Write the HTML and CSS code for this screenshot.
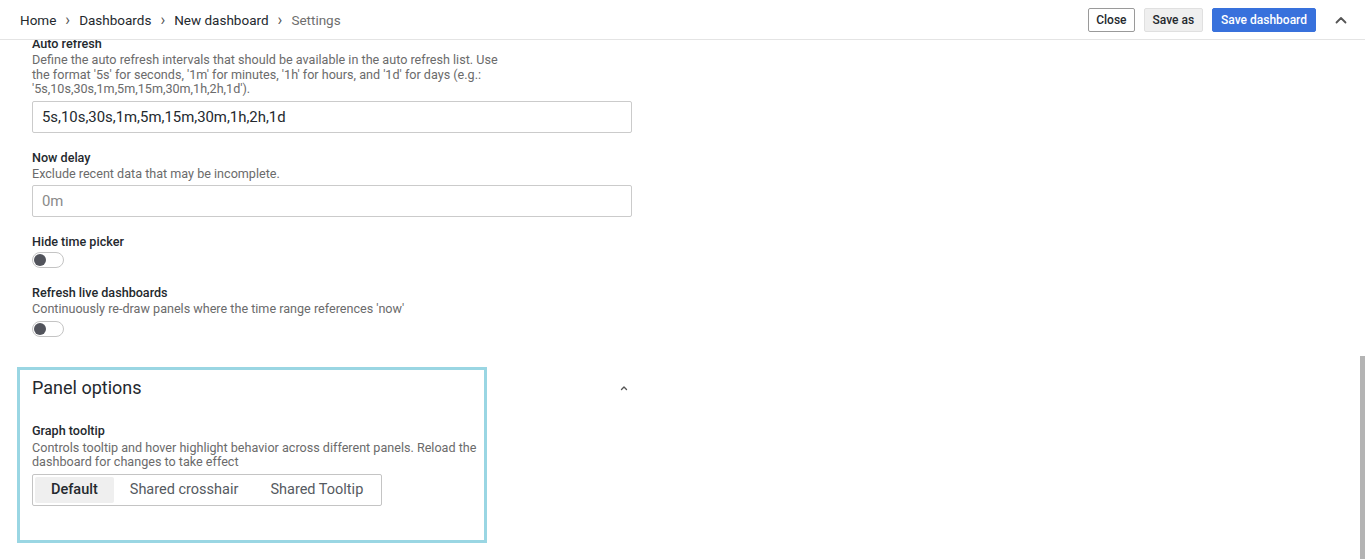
FILE: index.html
```
<!DOCTYPE html>
<html lang="en">
<head>
<meta charset="utf-8">
<title>Settings</title>
<link rel="stylesheet" href="styles.css">
</head>
<body>
<div class="app">
  <header class="topbar">
    <nav class="crumbs">
      <span class="crumb">Home</span>
      <span class="sep">›</span>
      <span class="crumb">Dashboards</span>
      <span class="sep">›</span>
      <span class="crumb">New dashboard</span>
      <span class="sep">›</span>
      <span class="crumb current">Settings</span>
    </nav>
    <div class="actions">
      <button class="btn btn-outline">Close</button>
      <button class="btn btn-secondary">Save as</button>
      <button class="btn btn-primary">Save dashboard</button>
      <span class="collapse">
        <svg width="14" height="14" viewBox="0 0 14 14"><path d="M2.5 9.5 L7 5 L11.5 9.5" fill="none" stroke="#555" stroke-width="1.8" stroke-linecap="round" stroke-linejoin="round"/></svg>
      </span>
    </div>
  </header>
  <div class="body-row">
    <main class="content">
      <div class="field first">
        <div class="label">Auto refresh</div>
        <div class="desc">Define the auto refresh intervals that should be available in the auto refresh list. Use<br>the format '5s' for seconds, '1m' for minutes, '1h' for hours, and '1d' for days (e.g.:<br>'5s,10s,30s,1m,5m,15m,30m,1h,2h,1d').</div>
        <div class="input">5s,10s,30s,1m,5m,15m,30m,1h,2h,1d</div>
      </div>
      <div class="field">
        <div class="label">Now delay</div>
        <div class="desc">Exclude recent data that may be incomplete.</div>
        <div class="input placeholder">0m</div>
      </div>
      <div class="field">
        <div class="label">Hide time picker</div>
        <div class="toggle"><span class="knob"></span></div>
      </div>
      <div class="field">
        <div class="label">Refresh live dashboards</div>
        <div class="desc">Continuously re-draw panels where the time range references 'now'</div>
        <div class="toggle"><span class="knob"></span></div>
      </div>
      <section class="panel-box">
        <div class="section-head">
          <h2 class="section-title">Panel options</h2>
          <svg class="section-chev" width="10" height="10" viewBox="0 0 10 10"><path d="M2.5 6.5 L5 4 L7.5 6.5" fill="none" stroke="#555" stroke-width="1.4" stroke-linecap="round" stroke-linejoin="round"/></svg>
        </div>
        <div class="field tooltip-field">
          <div class="label">Graph tooltip</div>
          <div class="desc narrow">Controls tooltip and hover highlight behavior across different panels. Reload the dashboard for changes to take effect</div>
          <div class="radio-group">
            <span class="opt active">Default</span>
            <span class="opt">Shared crosshair</span>
            <span class="opt">Shared Tooltip</span>
          </div>
        </div>
      </section>
    </main>
    <div class="scroll-track"><div class="scroll-thumb"></div></div>
  </div>
</div>
</body>
</html>
```
FILE: styles.css
```
* { box-sizing: border-box; }
html, body { margin: 0; padding: 0; }
body {
  font-family: "Roboto", "Liberation Sans", sans-serif;
  color: #24292e;
  background: #ffffff;
  width: 1365px;
  height: 559px;
  overflow: hidden;
}
.app { display: flex; flex-direction: column; height: 559px; }
.topbar {
  height: 40px;
  flex: none;
  display: flex;
  align-items: center;
  justify-content: space-between;
  padding: 0 9px 0 20px;
  border-bottom: 1px solid #e4e4e4;
}
.crumbs { display: flex; align-items: center; font-size: 13.5px; }
.crumb { color: #24292e; }
.crumb.current { color: #6e6e6e; }
.sep { color: #555; margin: 0 9px; font-size: 16px; line-height: 14px; }
.actions { display: flex; align-items: center; gap: 9px; }
.btn {
  font-family: inherit;
  font-size: 12px;
  font-weight: 500;
  height: 24px;
  padding: 0 8px;
  border-radius: 2px;
  cursor: pointer;
}
.btn-outline { background: #fff; border: 1px solid #9a9a9a; color: #24292e; padding: 0 7px; }
.btn-secondary { background: #efefef; border: 1px solid #e0e0e0; color: #24292e; }
.btn-primary { background: #3871dc; border: 1px solid #3871dc; color: #fff; }
.collapse { display: flex; align-items: center; justify-content: center; width: 30px; height: 24px; margin-left: 1px; }

.body-row { flex: 1; display: flex; min-height: 0; }
.content { flex: 1; padding: 0 0 0 32px; overflow: hidden; }
.scroll-track { width: 5px; flex: none; padding-top: 316px; }
.scroll-thumb { height: 203px; background: #b4b4b4; }

.field { width: 600px; margin-top: 17px; }
.field.first { margin-top: -4px; }
.label { font-size: 12.6px; font-weight: 500; line-height: 16px; color: #24292e; }
.desc { font-size: 12.6px; line-height: 14.5px; color: #6b6b6b; margin-top: 1px; max-width: 482px; }
.input {
  margin-top: 4px;
  height: 32px;
  border: 1px solid #cbcbcb;
  border-radius: 2px;
  padding: 0 9px;
  font-size: 14.9px;
  line-height: 30px;
  color: #24292e;
}
.input.placeholder { color: #8a8a8a; }
.toggle {
  margin-top: 2px;
  width: 32px;
  height: 16px;
  border: 1px solid #c4c4c4;
  border-radius: 8px;
  position: relative;
  background: #fff;
}
.knob {
  position: absolute;
  left: 1px;
  top: 1px;
  width: 12px;
  height: 12px;
  border-radius: 50%;
  background: #52545c;
}
.desc + .toggle { margin-top: 4px; }

.panel-box {
  margin: 30px 0 17px -15px;
  width: 470px;
  border: 3px solid #9ad6e3;
  padding: 5px 0 34px 12px;
}
.section-head {
  width: 600px;
  display: flex;
  align-items: center;
  justify-content: space-between;
  height: 26px;
}
.section-title { margin: 0; font-size: 18px; font-weight: 400; color: #24292e; line-height: 24px; }
.section-chev { margin-right: 3px; }
.tooltip-field { margin-top: 22px; width: 445px; }
.desc.narrow { width: 445px; margin-top: 2px; }
.radio-group {
  margin-top: 4px;
  display: inline-flex;
  border: 1px solid #c4c4c4;
  border-radius: 2px;
  padding: 2px;
  height: 32px;
}
.opt {
  font-size: 14.5px;
  line-height: 26px;
  padding: 0 16px;
  color: #555a61;
  border-radius: 2px;
}
.opt.active { background: #efefef; color: #24292e; font-weight: 500; }
```
